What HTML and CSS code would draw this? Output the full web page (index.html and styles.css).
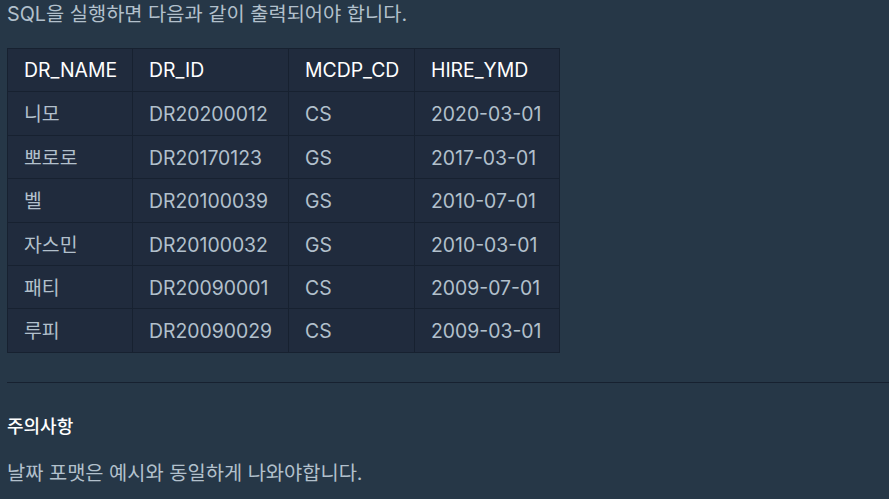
FILE: index.html
```html
<!DOCTYPE html>
<html lang="ko">
<head>
<meta charset="utf-8">
<link rel="stylesheet" href="styles.css">
</head>
<body>
<div class="content">
  <p class="lead">SQL을 실행하면 다음과 같이 출력되어야 합니다.</p>
  <table class="result">
    <colgroup>
      <col class="c-name"><col class="c-id"><col class="c-cd"><col class="c-ymd">
    </colgroup>
    <thead>
      <tr><th>DR_NAME</th><th>DR_ID</th><th>MCDP_CD</th><th>HIRE_YMD</th></tr>
    </thead>
    <tbody>
      <tr><td>니모</td><td>DR20200012</td><td>CS</td><td>2020-03-01</td></tr>
      <tr><td>뽀로로</td><td>DR20170123</td><td>GS</td><td>2017-03-01</td></tr>
      <tr><td>벨</td><td>DR20100039</td><td>GS</td><td>2010-07-01</td></tr>
      <tr><td>자스민</td><td>DR20100032</td><td>GS</td><td>2010-03-01</td></tr>
      <tr><td>패티</td><td>DR20090001</td><td>CS</td><td>2009-07-01</td></tr>
      <tr><td>루피</td><td>DR20090029</td><td>CS</td><td>2009-03-01</td></tr>
    </tbody>
  </table>
  <hr class="divider">
  <h5 class="subhead">주의사항</h5>
  <p class="note">날짜 포맷은 예시와 동일하게 나와야합니다.</p>
</div>
</body>
</html>
```
FILE: styles.css
```css
html, body {
  margin: 0;
  padding: 0;
  background: #263747;
}
body {
  font-family: Inter, "Noto Sans CJK KR", sans-serif;
  color: #b2c0cc;
  font-size: 19.8px;
  line-height: 1.6;
  overflow: hidden;
}
.content {
  padding: 0 0 0 7px;
}
.lead {
  margin: 0;
  line-height: 28px;
}
.result {
  margin-top: 20px;
  border-collapse: collapse;
  table-layout: fixed;
  width: 552px;
  background: #202b3d;
  border: 1px solid #172130;
  font-size: 19.4px;
}
.c-name { width: 125px; }
.c-id { width: 156px; }
.c-cd { width: 126px; }
.c-ymd { width: 145px; }
.result th,
.result td {
  border: 1px solid #172130;
  padding: 8px 16px;
  text-align: left;
  line-height: 26.4px;
  font-weight: 400;
  white-space: nowrap;
}
.result td {
  padding-top: 9px;
  padding-bottom: 7px;
}
.result th {
  color: #ffffff;
}
.divider {
  border: 0;
  border-top: 1px solid #172130;
  margin: 29px 0 0 0;
}
.subhead {
  margin: 30px 0 0 0;
  color: #ffffff;
  font-size: 18px;
  font-weight: 500;
  line-height: 28px;
}
.note {
  margin: 18px 0 0 0;
  line-height: 28px;
}
```
